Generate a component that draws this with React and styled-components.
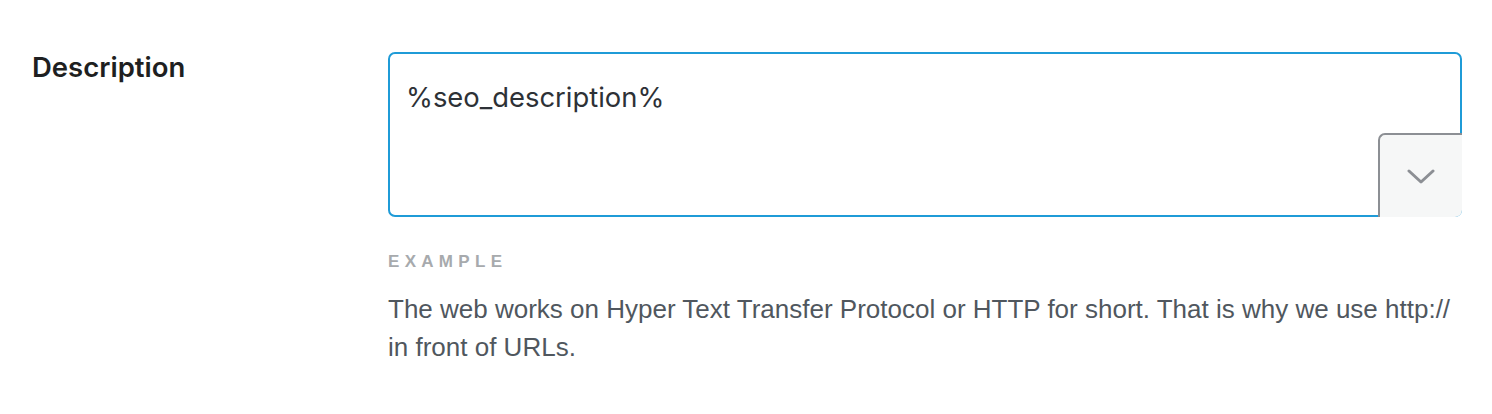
import React from 'react'
import styled, { createGlobalStyle } from 'styled-components'

const GlobalStyle = createGlobalStyle`
  body {
    margin: 0;
    background: #fff;
    font-family: Inter, "Noto Sans", sans-serif;
  }
`

const Row = styled.div`
  display: flex;
  align-items: flex-start;
  padding: 52px 30px 0 32px;
  width: 1492px;
  box-sizing: border-box;
`

const Label = styled.div`
  width: 356px;
  flex-shrink: 0;
  font-size: 27.5px;
  font-weight: 600;
  color: #1e1f21;
  line-height: 30px;
`

const Field = styled.div`
  flex: 1;
  display: flex;
  flex-direction: column;
`

const Editor = styled.div`
  position: relative;
  height: 165px;
  border: 2px solid #1f9bd7;
  border-radius: 7px;
  box-sizing: border-box;
  padding: 28px 16px;
  font-size: 27.4px;
  color: #2d3136;
  line-height: 30px;
`

const DropButton = styled.button`
  position: absolute;
  right: -2px;
  bottom: -2px;
  width: 84px;
  height: 84px;
  border: 2px solid #8c8f94;
  border-right: none;
  border-bottom: none;
  border-radius: 7px 0 7px 0;
  background: #f6f7f7;
  display: flex;
  align-items: center;
  justify-content: center;
  padding: 0;
  cursor: pointer;
`

const Caption = styled.div`
  margin-top: 34px;
  font-family: "Liberation Sans", Arial, sans-serif;
  font-size: 17px;
  font-weight: 700;
  letter-spacing: 5.3px;
  color: #a7aaad;
  text-transform: uppercase;
  line-height: 22px;
`

const Sample = styled.p`
  margin: 17px 0 0;
  font-family: "Liberation Sans", Arial, sans-serif;
  font-size: 26px;
  line-height: 38px;
  color: #50575e;
  max-width: 1068px;
`

const App = () => (
  <>
    <GlobalStyle />
    <Row>
      <Label>Description</Label>
      <Field>
        <Editor>
          %seo_description%
          <DropButton aria-label='Insert variable'>
            <svg width='28' height='16' viewBox='0 0 28 16'>
              <path d='M2 3l12 11L26 3' fill='none' stroke='#8c8f94' strokeWidth='3' strokeLinecap='round' strokeLinejoin='round' />
            </svg>
          </DropButton>
        </Editor>
        <Caption>Example</Caption>
        <Sample>
          The web works on Hyper Text Transfer Protocol or HTTP for short. That is why we use http:// in front of URLs.
        </Sample>
      </Field>
    </Row>
  </>
)

export default App
